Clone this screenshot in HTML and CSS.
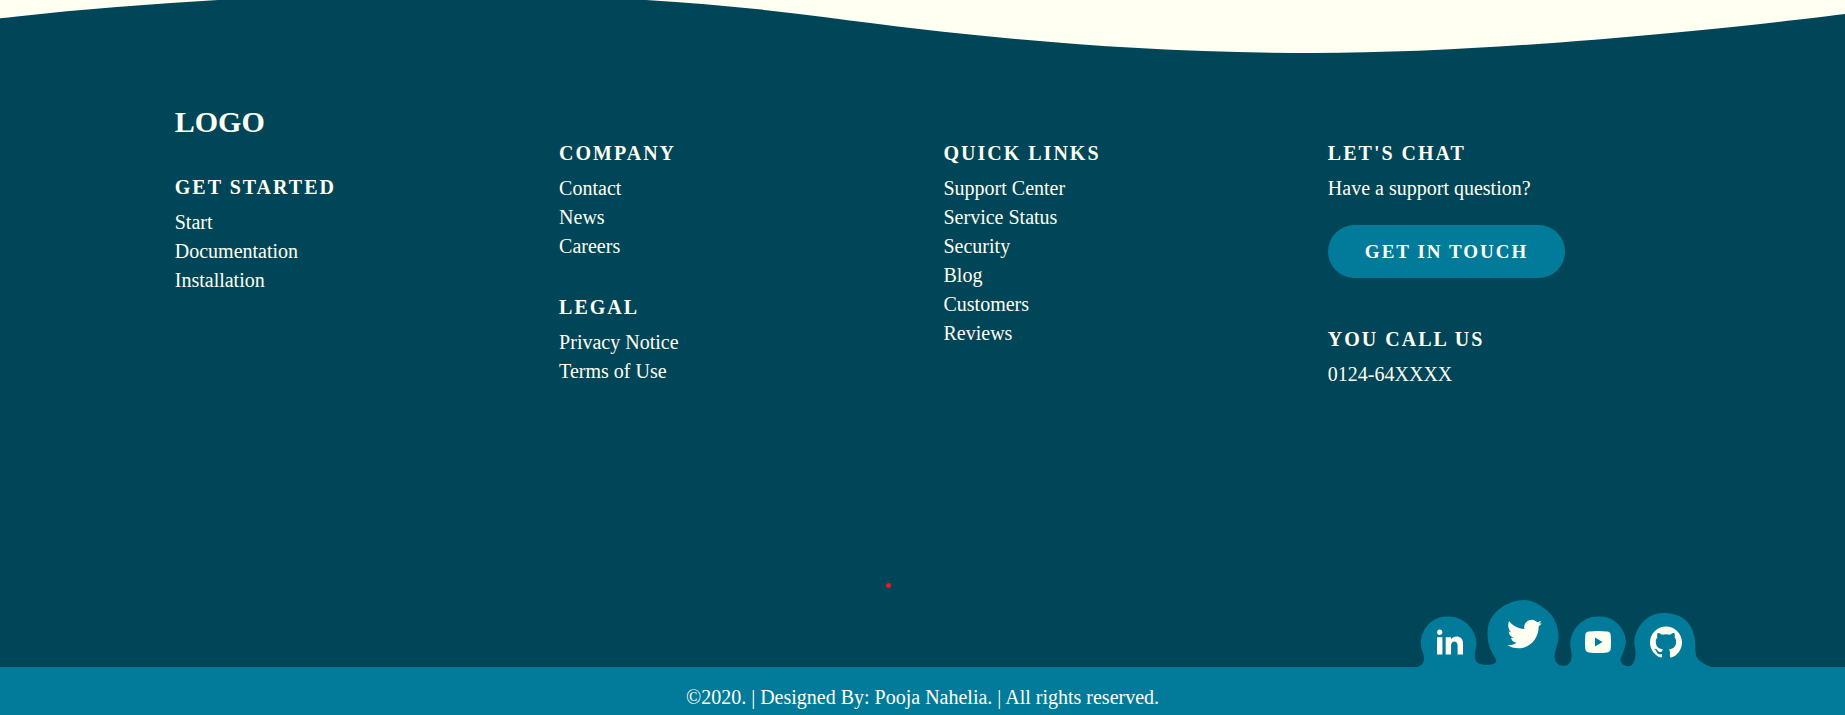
FILE: index.html
```html
<!DOCTYPE html>
<html lang="en">
<head>
<meta charset="utf-8">
<meta name="viewport" content="width=device-width, initial-scale=1">
<title>Footer</title>
<link rel="stylesheet" href="styles.css">
</head>
<body>
<footer class="footer">
  <svg class="wave" viewBox="0 14.5 1196 85.5" preserveAspectRatio="none" aria-hidden="true">
    <path d="M851.8,100c125,0,288.3-45,348.2-64V0H0v44c3.7-1,7.3-1.9,11-2.9C80.7,22,151.7,10.8,223.5,6.3C276.7,2.9,330,4,383,9.8c52.2,5.7,103.3,16.2,153.4,32.8C623.9,71.3,726.8,100,851.8,100z"/>
  </svg>
  <div class="columns">
    <div class="column column-logo">
      <h1 class="logo">LOGO</h1>
      <section class="menu">
        <h2 class="title">GET STARTED</h2>
        <ul class="list">
          <li><a href="#">Start</a></li>
          <li><a href="#">Documentation</a></li>
          <li><a href="#">Installation</a></li>
        </ul>
      </section>
    </div>
    <div class="column">
      <section class="menu">
        <h2 class="title">COMPANY</h2>
        <ul class="list">
          <li><a href="#">Contact</a></li>
          <li><a href="#">News</a></li>
          <li><a href="#">Careers</a></li>
        </ul>
      </section>
      <section class="menu">
        <h2 class="title">LEGAL</h2>
        <ul class="list">
          <li><a href="#">Privacy Notice</a></li>
          <li><a href="#">Terms of Use</a></li>
        </ul>
      </section>
    </div>
    <div class="column">
      <section class="menu">
        <h2 class="title">QUICK LINKS</h2>
        <ul class="list">
          <li><a href="#">Support Center</a></li>
          <li><a href="#">Service Status</a></li>
          <li><a href="#">Security</a></li>
          <li><a href="#">Blog</a></li>
          <li><a href="#">Customers</a></li>
          <li><a href="#">Reviews</a></li>
        </ul>
      </section>
    </div>
    <div class="column column-contact">
      <section class="menu">
        <h2 class="title">LET'S CHAT</h2>
        <p class="text">Have a support question?</p>
        <button class="button" type="button">GET IN TOUCH</button>
      </section>
      <section class="menu">
        <h2 class="title">YOU CALL US</h2>
        <p class="text"><a href="tel:012464">0124-64XXXX</a></p>
      </section>
    </div>
  </div>
  <span class="dot"></span>
  <nav class="social" aria-label="Social links">
    <svg class="amoeba" viewBox="0 0 236 54" preserveAspectRatio="none" aria-hidden="true">
      <path d="M223.06,43.32c-.77-7.2,1.87-28.47-20-32.53C187.78,8,180.41,18,178.32,20.7s-5.63,10.1-4.07,16.7-.13,15.23-4.06,15.91-8.75-2.9-6.89-7S167.41,36,167.15,33a18.93,18.93,0,0,0-2.64-8.53c-3.44-5.5-8-11.19-19.12-11.19a21.64,21.64,0,0,0-18.31,9.18c-2.08,2.7-5.66,9.6-4.07,16.69s.64,14.32-6.11,13.9S108.35,46.5,112,36.54s-1.89-21.24-4-23.94S96.34,0,85.23,0,57.46,8.84,56.49,24.56s6.92,20.79,7,24.59c.07,2.75-6.43,4.16-12.92,2.38s-4-10.75-3.46-12.38c1.85-6.6-2-14-4.08-16.69a21.62,21.62,0,0,0-18.3-9.18C13.62,13.28,9.06,19,5.62,24.47A18.81,18.81,0,0,0,3,33a21.85,21.85,0,0,0,1.58,9.08,16.58,16.58,0,0,1,1.06,5A6.75,6.75,0,0,1,0,54H236C235.47,54,223.83,50.52,223.06,43.32Z"/>
    </svg>
    <ul class="icons">
      <li><a href="#" aria-label="LinkedIn"><svg class="icon icon-small" viewBox="0 1 24 23"><path d="M4.98 3.5c0 1.381-1.11 2.5-2.48 2.5s-2.48-1.119-2.48-2.5c0-1.38 1.11-2.5 2.48-2.5s2.48 1.12 2.48 2.5zm.02 4.5h-5v16h5v-16zm7.982 0h-4.968v16h4.969v-8.399c0-4.67 6.029-5.052 6.029 0v8.399h4.988v-10.131c0-7.88-8.922-7.593-11.018-3.714v-2.155z"/></svg></a></li>
      <li class="raised"><a href="#" aria-label="Twitter"><svg class="icon icon-large" viewBox="81 59 105 88"><path d="M87,64C98,78 114,87 133,88C130,72 142,60 155,60C162,60 167,63 171,67C175,67 179,65 183,63C182,67 180,70 177,72L185,71C183,75 180,78 176,80C177,115 150,146 116,146C103,146 91,142 82,136C94,137 103,134 110,129C101,128 95,123 93,115L101,115C91,111 86,103 86,95C88,97 91,98 94,98C85,91 82,77 87,64Z"/></svg></a></li>
      <li><a href="#" aria-label="YouTube"><svg class="icon icon-small" viewBox="0 0 26 22"><path fill-rule="evenodd" d="M4 .6Q13-.4 22 .6Q25.400 1 25.700 4Q26.200 11 25.700 18Q25.400 21 22 21.400Q13 22.400 4 21.400Q.6 21 .3 18Q-.2 11 .3 4Q.6 1 4 .6ZM10 6.500V15.500L17.500 11Z"/></svg></a></li>
      <li><a href="#" aria-label="GitHub"><svg class="icon" viewBox="0 0 24 24"><path d="M12 .297c-6.63 0-12 5.373-12 12 0 5.303 3.438 9.8 8.205 11.385.6.113.82-.258.82-.577 0-.285-.01-1.04-.015-2.04-3.338.724-4.042-1.61-4.042-1.61C4.422 18.07 3.633 17.7 3.633 17.7c-1.087-.744.084-.729.084-.729 1.205.084 1.838 1.236 1.838 1.236 1.07 1.835 2.809 1.305 3.495.998.108-.776.417-1.305.76-1.605-2.665-.3-5.466-1.332-5.466-5.93 0-1.31.465-2.38 1.235-3.22-.135-.303-.54-1.523.105-3.176 0 0 1.005-.322 3.3 1.23.96-.267 1.98-.399 3-.405 1.02.006 2.04.138 3 .405 2.28-1.552 3.285-1.23 3.285-1.23.645 1.653.24 2.873.12 3.176.765.84 1.23 1.91 1.23 3.22 0 4.61-2.805 5.625-5.475 5.92.42.36.81 1.096.81 2.22 0 1.606-.015 2.896-.015 3.286 0 .315.21.69.825.57C20.565 22.092 24 17.592 24 12.297c0-6.627-5.373-12-12-12"/></svg></a></li>
    </ul>
  </nav>
  <div class="copyright">©2020. | Designed By: Pooja Nahelia. | All rights reserved.</div>
</footer>
</body>
</html>
```
FILE: styles.css
```css
:root {
  --cream: #fffff2;
  --dark: #014658;
  --teal: #027b9a;
}

* {
  box-sizing: border-box;
}

body,
h1,
h2,
p,
ul {
  margin: 0;
  padding: 0;
}

ul {
  list-style: none;
}

a {
  color: inherit;
  text-decoration: none;
}

.footer {
  position: relative;
  display: flex;
  flex-direction: column;
  min-height: 100vh;
  background: var(--dark);
  color: var(--cream);
  font-family: "Liberation Serif", "Times New Roman", serif;
  font-size: 20px;
  line-height: 29px;
}

.wave {
  display: block;
  width: 100%;
  height: 53px;
  fill: var(--cream);
}

.columns {
  display: grid;
  grid-template-columns: repeat(4, 1fr);
  width: 83.333%;
  margin: 0 auto;
  padding-top: 48px;
}

.column {
  display: flex;
  flex-direction: column;
  gap: 32px;
  padding: 38px 21px 0;
}

.column-logo {
  gap: 30px;
  padding-top: 0;
}

.column-contact {
  gap: 47px;
}

.logo {
  font-size: 30px;
  line-height: 42px;
}

.title {
  margin-bottom: 6px;
  font-size: 20px;
  letter-spacing: 2px;
}

.button {
  display: block;
  margin-top: 22px;
  padding: 12px 37px;
  border: 0;
  border-radius: 32px;
  background: var(--teal);
  color: inherit;
  font: inherit;
  font-size: 19px;
  font-weight: bold;
  letter-spacing: 2px;
}

.dot {
  position: absolute;
  top: 583px;
  left: 48%;
  width: 5px;
  height: 5px;
  border-radius: 50%;
  background: #e91c1c;
}

.social {
  display: grid;
  width: 295px;
  margin: auto 133px 0 auto;
}

.amoeba {
  grid-area: 1 / 1;
  display: block;
  width: 295px;
  height: 67px;
  fill: var(--teal);
}

.icons {
  grid-area: 1 / 1;
  display: grid;
  grid-template-columns: 56px 92px 56px 79px;
  align-items: end;
  justify-items: center;
  padding: 0 5px 9px;
}

.raised {
  padding-bottom: 8px;
}

.icons a {
  display: flex;
  align-items: center;
  justify-content: center;
  width: 35px;
  height: 32px;
}

.icon {
  width: 32px;
  height: 32px;
  fill: var(--cream);
}

.icon-small {
  width: 26px;
}

.icon-large {
  width: 35px;
}

.copyright {
  padding: 16px 0 3px;
  background: var(--teal);
  text-align: center;
}
```
